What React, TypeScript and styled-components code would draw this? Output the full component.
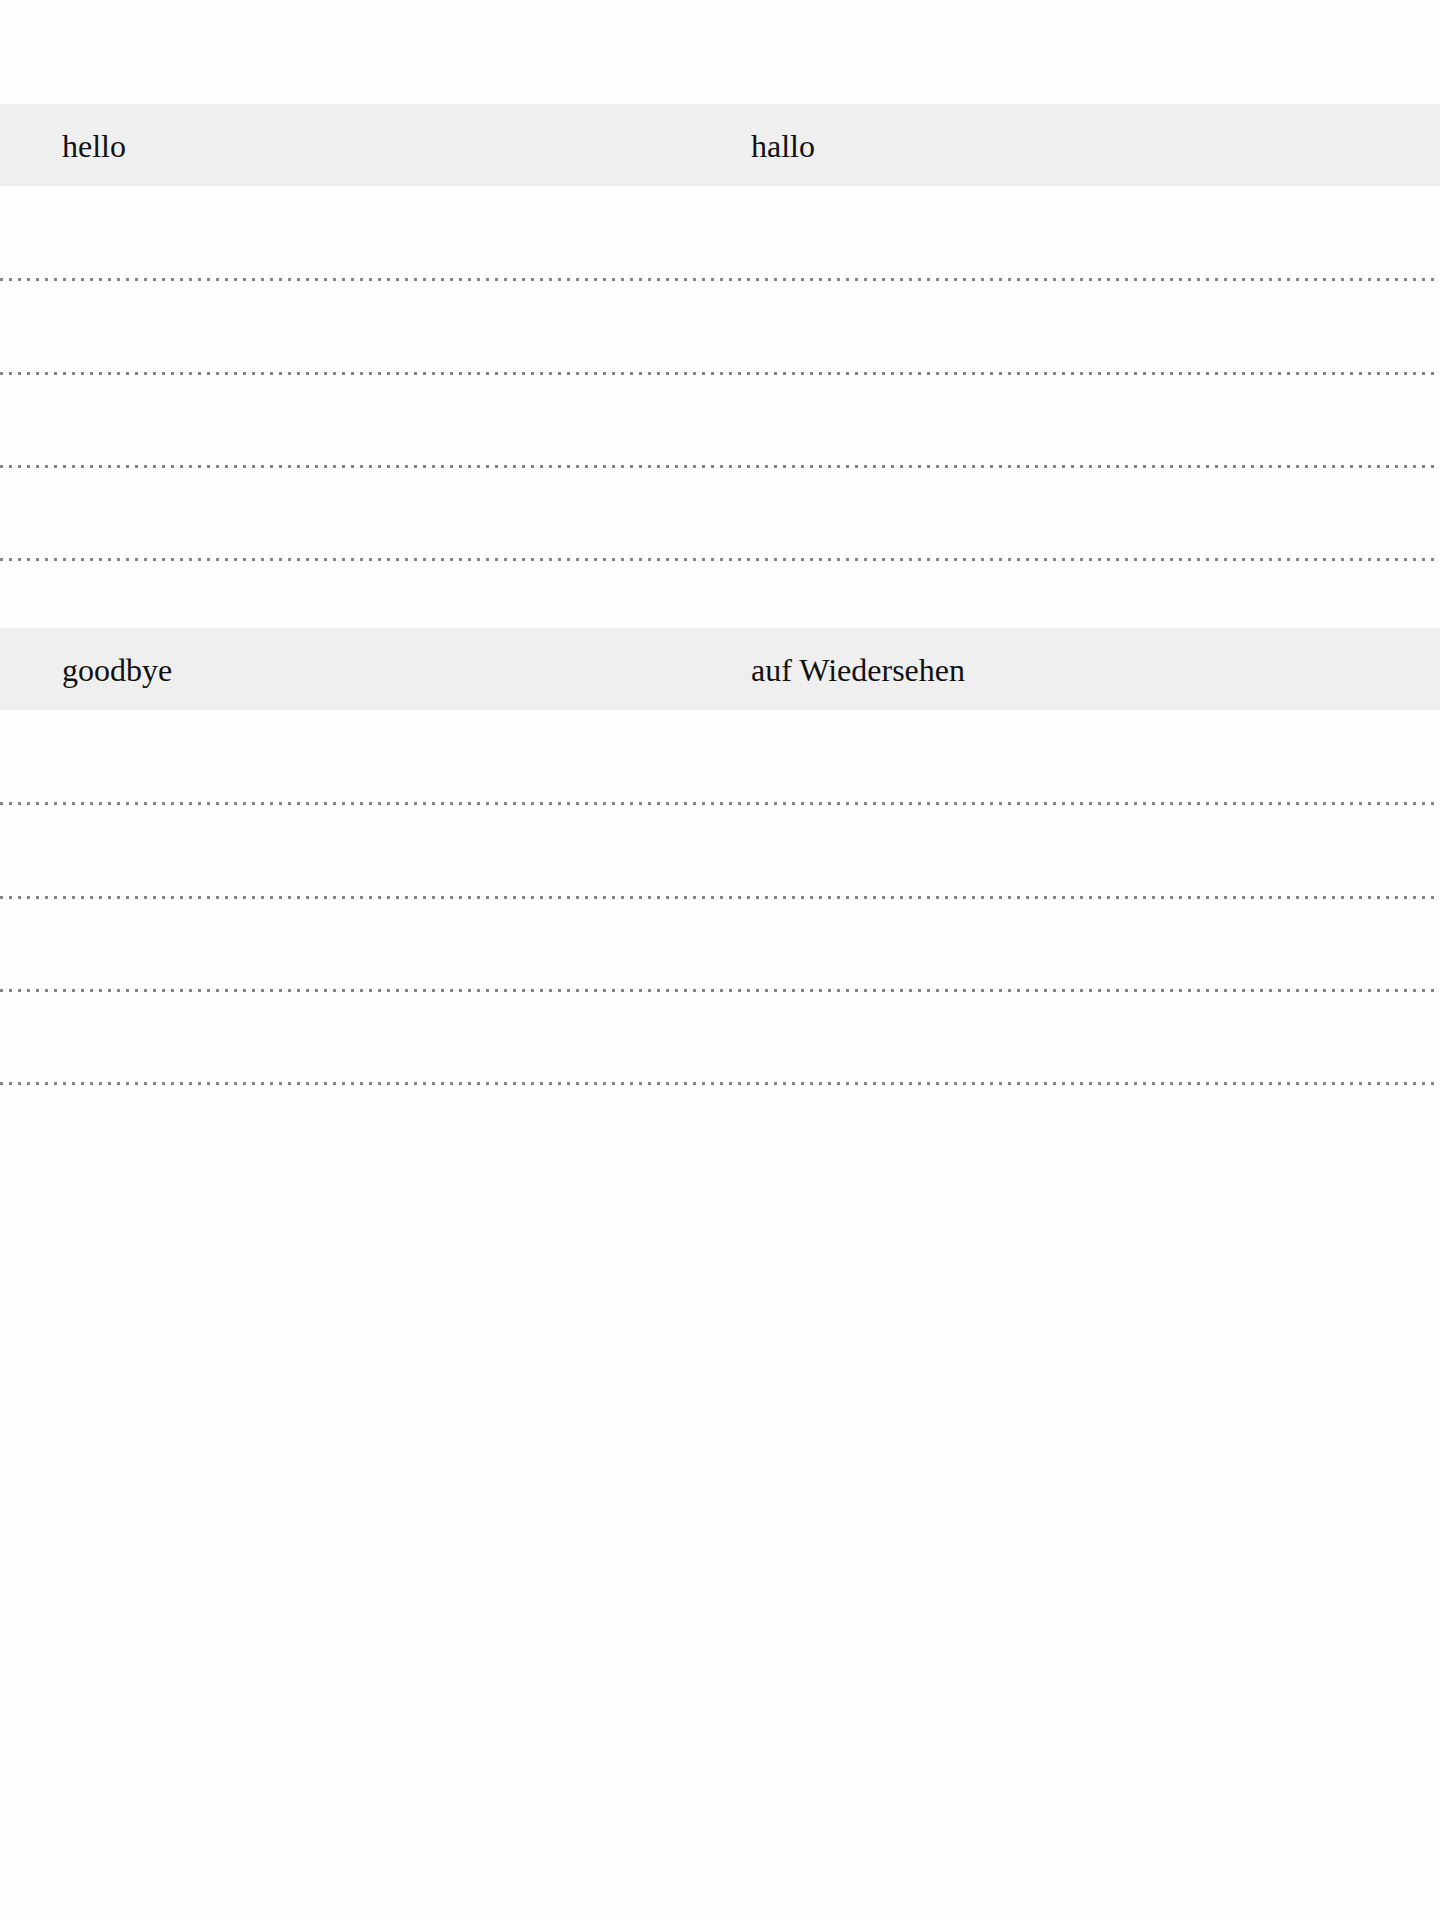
import React from 'react'
import styled, { createGlobalStyle } from 'styled-components'

const GlobalStyle = createGlobalStyle`
  html, body {
    margin: 0;
    padding: 0;
    background: #fefefe;
  }
  body {
    font-family: "Liberation Serif", "Times New Roman", serif;
    color: #111;
  }
`

const Page = styled.div`
  width: 100%;
  min-height: 1920px;
  padding-top: 104px;
  box-sizing: border-box;
`
const Section = styled.section`
  display: flex;
  flex-direction: column;
  margin-bottom: 66.7px;
`
const Band = styled.div`
  height: 82px;
  background: #efefef;
  display: grid;
  grid-template-columns: 1fr 1fr;
  align-items: center;
  padding-left: 62px;
  padding-top: 2px;
  box-sizing: border-box;
`
const Term = styled.div`
  font-size: 32px;
  line-height: 1;
`
const Lines = styled.div`
  display: flex;
  flex-direction: column;
  padding-top: 2px;
`
const Line = styled.div`
  height: 93.33px;
  flex-shrink: 0;
  background-image: linear-gradient(to right, #858585 3px, transparent 3px);
  background-size: 9px 3px;
  background-repeat: repeat-x;
  background-position: 0 bottom;
`

type Entry = {
  en: string,
  de: string,
}

const entries: Entry[] = [
  { en: 'hello', de: 'hallo' },
  { en: 'goodbye', de: 'auf Wiedersehen' },
]

const App = () => (
  <Page>
    <GlobalStyle />
    {entries.map(entry => (
      <Section key={entry.en}>
        <Band>
          <Term>{entry.en}</Term>
          <Term>{entry.de}</Term>
        </Band>
        <Lines>
          {[0, 1, 2, 3].map(i => <Line key={i} />)}
        </Lines>
      </Section>
    ))}
  </Page>
)

export default App
